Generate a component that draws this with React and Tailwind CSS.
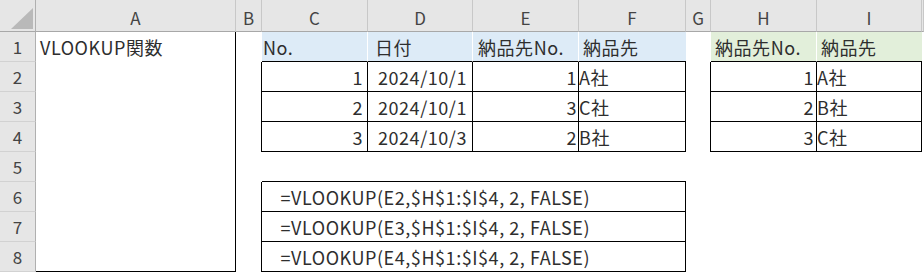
import React from 'react';
import clsx from 'clsx';

const COLS = ['A', 'B', 'C', 'D', 'E', 'F', 'G', 'H', 'I', ''];

const BG = {
  blue: 'bg-[#ddebf7]',
  green: 'bg-[#e2efda]',
};

const RIGHT = {
  k: 'border-r border-r-black',
  w: 'border-r border-r-white',
};

const BOTTOM = {
  k: 'border-b border-b-black',
};

const master = [
  ['1', '2024/10/1', '1', 'A社'],
  ['2', '2024/10/1', '3', 'C社'],
  ['3', '2024/10/3', '2', 'B社'],
];
const clients = ['A社', 'B社', 'C社'];

function buildRows() {
  const rows = [];
  // row 1: headings
  rows.push([
    { t: 'VLOOKUP関数', r: 'k', cls: 'pl-[4px]' },
    {},
    { t: 'No.', bg: 'blue', r: 'w', b: 'k', cls: 'pl-[1px]' },
    { t: '日付', bg: 'blue', r: 'w', b: 'k', cls: 'pl-[7px]' },
    { t: '納品先No.', bg: 'blue', r: 'w', b: 'k', cls: 'pl-[5px]' },
    { t: '納品先', bg: 'blue', b: 'k', cls: 'pl-[4px]' },
    {},
    { t: '納品先No.', bg: 'green', r: 'w', b: 'k', cls: 'pl-[4px]' },
    { t: '納品先', bg: 'green', b: 'k', cls: 'pl-[4px]' },
    {},
  ]);
  // rows 2-4: data tables
  master.forEach(([no, date, code, name], i) => {
    rows.push([
      { r: 'k' },
      { r: 'k' },
      { t: no, al: 'r', r: 'k', b: 'k', cls: 'pr-[4px]' },
      { t: date, al: 'r', r: 'k', b: 'k', cls: 'pr-[5px]' },
      { t: code, al: 'r', r: 'k', b: 'k', cls: 'pr-[1px]' },
      { t: name, r: 'k', b: 'k', cls: 'pl-0' },
      { r: 'k' },
      { t: String(i + 1), al: 'r', r: 'k', b: 'k', cls: 'pr-[2px]' },
      { t: clients[i], r: 'k', b: 'k', cls: 'pl-0' },
      {},
    ]);
  });
  // row 5: gap, top edge of the formula box
  rows.push([{ r: 'k' }, {}, { b: 'k' }, { b: 'k' }, { b: 'k' }, { b: 'k' }, {}, {}, {}, {}]);
  // rows 6-8: formulas
  ['E2', 'E3', 'E4'].forEach((ref, i) => {
    rows.push([
      { r: 'k', b: i === 2 ? 'k' : undefined },
      { r: 'k' },
      { t: `\u3000=VLOOKUP(${ref},$H$1:$I$4, 2, FALSE)`, r: 'k', b: 'k', span: 4, cls: 'pl-0' },
      {},
      {},
      {},
      {},
    ]);
  });
  return rows;
}

function Cell({ c }) {
  return (
    <div
      className={clsx(
        'overflow-hidden whitespace-nowrap leading-[30px] text-[18px] tracking-[0.55px] text-[#2e2e2e]',
        BG[c.bg],
        c.r && RIGHT[c.r],
        c.b && BOTTOM[c.b],
        c.al === 'r' ? 'text-right' : 'text-left',
        c.span === 4 && 'col-span-4',
        c.cls
      )}
    >
      {c.t}
    </div>
  );
}

export default function App() {
  const rows = buildRows();

  return (
    <div className="w-[924px] h-[273px] overflow-hidden bg-white font-['Noto_Sans_CJK_JP','Noto_Sans',sans-serif]">
      <div className="grid grid-cols-[36px_200px_26px_106px_105px_106px_107px_25px_106px_105px_2px] grid-rows-[32px_repeat(8,30px)]">
        {/* corner */}
        <div className="relative bg-[#e6e6e6] border-r border-b border-r-[#b0b0b0] border-b-[#a8a8a8]">
          <svg className="absolute left-[11px] top-[8px]" width="22" height="21" viewBox="0 0 22 21">
            <polygon points="22,0 22,21 0,21" fill="#b9b9b9" />
          </svg>
        </div>
        {COLS.map((col, i) => (
          <div
            key={col + i}
            className="bg-[#e6e6e6] border-b border-b-[#a8a8a8] border-r border-r-[#c8c8c8] text-center text-[17px] leading-[32px] pt-[2px] text-[#444]"
          >
            {col}
          </div>
        ))}

        {rows.map((row, ri) => (
          <React.Fragment key={ri}>
            <div className="bg-[#e6e6e6] border-r border-r-[#b0b0b0] border-b border-b-[#d2d2d2] text-center text-[17px] leading-[30px] text-[#444]">
              {ri + 1}
            </div>
            {row.map((c, ci) => (
              <Cell key={ci} c={c} />
            ))}
          </React.Fragment>
        ))}
      </div>
    </div>
  );
}
